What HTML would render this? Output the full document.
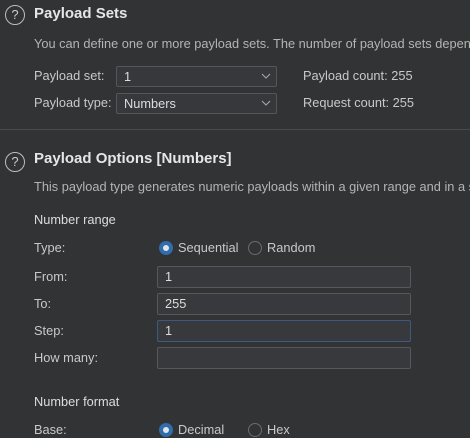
<!DOCTYPE html><html><head><style>
body{margin:0;width:470px;height:433px;overflow:hidden;background:#323335;font-family:"Liberation Sans","DejaVu Sans",sans-serif;color:#c9c9c9;font-size:12.8px;position:relative}
.a{position:absolute;white-space:nowrap;line-height:16px}
.h{font-weight:bold;font-size:15px;color:#e6e6e6}
.d{color:#b4b4b4}
.q{position:absolute;width:20px;height:20px;border:1.5px solid #bdbdbd;border-radius:50%;box-sizing:border-box;color:#ccc;font-size:13px;text-align:center;line-height:17px}
.sel,.in{position:absolute;box-sizing:border-box;border:1px solid #555659;background:#37383b;border-radius:2px;padding-left:7px;line-height:19px;color:#ddd}
.in{background:#38393c;border-color:#57585b}
.sel svg{position:absolute;right:5px;top:6px}
.r{position:absolute;width:14px;height:14px;border-radius:50%;box-sizing:border-box}
.on{background:#2f6dad}.on:after{content:"";position:absolute;left:4px;top:4px;width:6px;height:6px;border-radius:50%;background:#e4e4e4}
.off{border:1px solid #6a6b6e}
</style></head><body>
<div class="q" style="left:5px;top:5px">?</div>
<div class="a h" style="left:34px;top:6px">Payload Sets</div>
<div class="a d" style="left:34px;top:36px">You can define one or more payload sets. The number of payload sets depends</div>
<div class="a" style="left:34px;top:68px">Payload set:</div>
<div class="sel" style="left:116px;top:66px;width:161px;height:21px">1<svg width="10" height="7"><path d="M1 1l4 4 4-4" stroke="#aaa" fill="none"/></svg></div>
<div class="a" style="left:303px;top:68px">Payload count: 255</div>
<div class="a" style="left:34px;top:95px">Payload type:</div>
<div class="sel" style="left:116px;top:93px;width:161px;height:21px">Numbers<svg width="10" height="7"><path d="M1 1l4 4 4-4" stroke="#aaa" fill="none"/></svg></div>
<div class="a" style="left:303px;top:95px">Request count: 255</div>
<div style="position:absolute;left:0;top:129px;width:470px;height:1px;background:#4a4b4e"></div>
<div class="q" style="left:5px;top:152px">?</div>
<div class="a h" style="left:34px;top:151px">Payload Options [Numbers]</div>
<div class="a d" style="left:34px;top:179px">This payload type generates numeric payloads within a given range and in a sp</div>
<div class="a" style="left:34px;top:212px;color:#ddd">Number range</div>
<div class="a" style="left:34px;top:240px">Type:</div>
<div class="r on" style="left:159px;top:241px"></div><div class="a" style="left:178px;top:240px">Sequential</div>
<div class="r off" style="left:248px;top:241px"></div><div class="a" style="left:267px;top:240px">Random</div>
<div class="a" style="left:34px;top:269px">From:</div><div class="in" style="left:157px;top:266px;width:254px;height:22px">1</div>
<div class="a" style="left:34px;top:296px">To:</div><div class="in" style="left:157px;top:293px;width:254px;height:22px">255</div>
<div class="a" style="left:34px;top:323px">Step:</div><div class="in" style="left:157px;top:320px;width:254px;height:22px;border-color:#3c5a80">1</div>
<div class="a" style="left:34px;top:350px">How many:</div><div class="in" style="left:157px;top:347px;width:254px;height:22px"></div>
<div class="a" style="left:34px;top:394px;color:#ddd">Number format</div>
<div class="a" style="left:34px;top:422px">Base:</div>
<div class="r on" style="left:159px;top:423px"></div><div class="a" style="left:178px;top:422px">Decimal</div>
<div class="r off" style="left:248px;top:423px"></div><div class="a" style="left:267px;top:422px">Hex</div>
</body></html>
